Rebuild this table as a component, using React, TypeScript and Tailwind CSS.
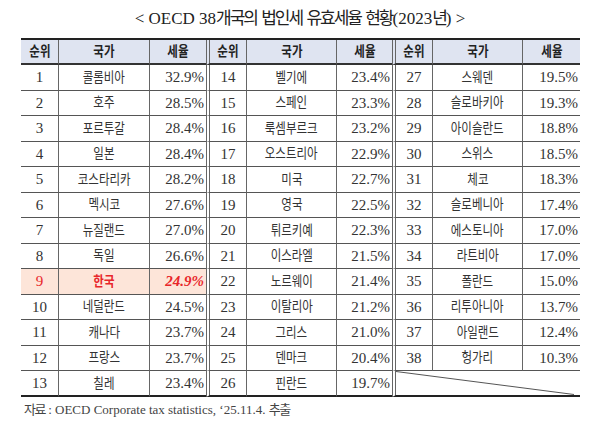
import React from "react";

type Row = [string, string, string];

const g1: Row[] = [
  ["1", "콜롬비아", "32.9%"],
  ["2", "호주", "28.5%"],
  ["3", "포르투갈", "28.4%"],
  ["4", "일본", "28.4%"],
  ["5", "코스타리카", "28.2%"],
  ["6", "멕시코", "27.6%"],
  ["7", "뉴질랜드", "27.0%"],
  ["8", "독일", "26.6%"],
  ["9", "한국", "24.9%"],
  ["10", "네덜란드", "24.5%"],
  ["11", "캐나다", "23.7%"],
  ["12", "프랑스", "23.7%"],
  ["13", "칠레", "23.4%"],
];
const g2: Row[] = [
  ["14", "벨기에", "23.4%"],
  ["15", "스페인", "23.3%"],
  ["16", "룩셈부르크", "23.2%"],
  ["17", "오스트리아", "22.9%"],
  ["18", "미국", "22.7%"],
  ["19", "영국", "22.5%"],
  ["20", "튀르키예", "22.3%"],
  ["21", "이스라엘", "21.5%"],
  ["22", "노르웨이", "21.4%"],
  ["23", "이탈리아", "21.2%"],
  ["24", "그리스", "21.0%"],
  ["25", "덴마크", "20.4%"],
  ["26", "핀란드", "19.7%"],
];
const g3: (Row | null)[] = [
  ["27", "스웨덴", "19.5%"],
  ["28", "슬로바키아", "19.3%"],
  ["29", "아이슬란드", "18.8%"],
  ["30", "스위스", "18.5%"],
  ["31", "체코", "18.3%"],
  ["32", "슬로베니아", "17.4%"],
  ["33", "에스토니아", "17.0%"],
  ["34", "라트비아", "17.0%"],
  ["35", "폴란드", "15.0%"],
  ["36", "리투아니아", "13.7%"],
  ["37", "아일랜드", "12.4%"],
  ["38", "헝가리", "10.3%"],
  null,
];

const groups: (Row | null)[][] = [g1, g2, g3];

const K = ({ children }: { children: React.ReactNode }) => (
  <span className="inline-block scale-x-[0.82] whitespace-nowrap">{children}</span>
);

function RowCells({ row, gi, ri }: { row: Row | null | undefined; gi: number; ri: number }) {
  const dbl = gi > 0;
  const dblCls = dbl ? "border-l-4 border-double border-l-[#666]" : "";
  if (ri < 0) {
    const headBase =
      "flex items-center justify-center bg-[#dfe4f1] border-b-2 border-b-[#333] font-bold text-[14px] text-[#222] h-[25px]";
    return (
      <>
        <div className={`${headBase} ${dblCls}`}>
          <K>순위</K>
        </div>
        <div className={`${headBase} border-l border-l-[#666]`}>
          <K>국가</K>
        </div>
        <div className={`${headBase} border-l border-l-[#666]`}>
          <K>세율</K>
        </div>
      </>
    );
  }
  const last = ri === 12;
  const hb = last ? "h-[26px] border-b-2 border-b-[#222]" : "h-[25.5px] border-b border-b-[#555]";
  if (!row) {
    return (
      <div className={`relative col-span-3 ${hb} ${dblCls}`}>
        <svg className="absolute left-0 top-0" width="182" height="24" viewBox="0 0 182 24">
          <line x1="0" y1="0.5" x2="178" y2="23.5" stroke="#555" strokeWidth="1" />
        </svg>
      </div>
    );
  }
  const hi = row[0] === "9";
  const bg = hi ? "bg-[#fde5d9]" : "";
  const tc = hi ? "text-[#e8262a]" : "text-[#333]";
  return (
    <>
      <div className={`flex items-center justify-center ${hb} ${bg} ${tc} text-[15px] ${dblCls}`}>{row[0]}</div>
      <div
        className={`flex items-center justify-center ${hb} ${bg} ${tc} text-[14px] border-l border-l-[#666] ${
          hi ? "font-bold" : ""
        }`}
      >
        <K>{row[1]}</K>
      </div>
      <div
        className={`flex items-center justify-end pr-[2px] ${hb} ${bg} ${tc} text-[15px] border-l border-l-[#666] ${
          hi ? "font-bold italic" : ""
        }`}
      >
        {row[2]}
      </div>
    </>
  );
}

export default function App() {
  const cells: React.ReactNode[] = [];
  for (let ri = -1; ri < 13; ri++) {
    groups.forEach((g, gi) => {
      cells.push(<RowCells key={`r${ri}-g${gi}`} row={ri < 0 ? undefined : g[ri]} gi={gi} ri={ri} />);
    });
  }

  return (
    <div
      className="w-[600px] h-[423px] bg-white text-[#333]"
      style={{ fontFamily: '"Liberation Serif", "Noto Sans CJK KR", serif' }}
    >
      <div className="pt-[7px] h-[38px] flex justify-center">
        <div className="text-[17px] leading-[24px] text-[#222] whitespace-nowrap">
          &lt; OECD 38<span className="tracking-[-2px]">개국의</span>{" "}
          <span className="tracking-[-2px]">법인세</span>{" "}
          <span className="tracking-[-2px]">유효세율</span>{" "}
          <span className="tracking-[-2px]">현황</span>(2023<span className="tracking-[-2px]">년</span>) &gt;
        </div>
      </div>
      <div className="ml-[21px] w-[559px] grid grid-cols-[37px_91px_57px_40px_90px_56px_40px_90px_58px] border-t-2 border-t-[#222]">
        {cells}
      </div>
      <div className="ml-[24px] mt-[5px] text-[13px] text-[#444] leading-[16px] whitespace-nowrap">
        <span className="tracking-[-1.5px]">자료</span> : OECD Corporate tax statistics, ‘25.11.4.{" "}
        <span className="tracking-[-1.5px]">추출</span>
      </div>
    </div>
  );
}
